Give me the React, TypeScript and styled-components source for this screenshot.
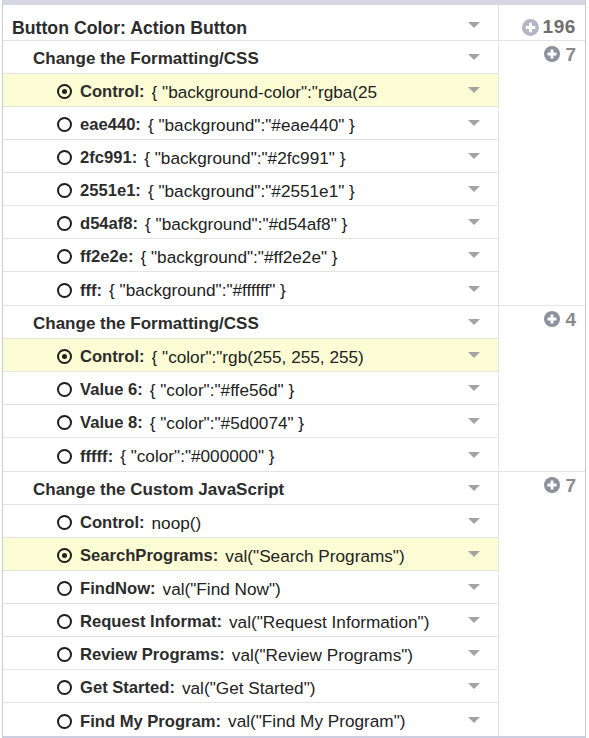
import React from "react";
import styled, { createGlobalStyle } from "styled-components";

const GlobalStyle = createGlobalStyle`
    html, body {
        margin: 0;
        padding: 0;
        background: #fff;
    }
    body {
        font-family: "Liberation Sans", Arial, Helvetica, sans-serif;
        color: #2b2b2b;
    }
`;

type Variation = {
    name: string;
    value: string;
    checked?: boolean;
};

type Group = {
    title: string;
    count: number;
    variations: Variation[];
};

const groups: Group[] = [
    {
        title: "Change the Formatting/CSS",
        count: 7,
        variations: [
            { name: "Control:", value: '{ "background-color":"rgba(25', checked: true },
            { name: "eae440:", value: '{ "background":"#eae440" }' },
            { name: "2fc991:", value: '{ "background":"#2fc991" }' },
            { name: "2551e1:", value: '{ "background":"#2551e1" }' },
            { name: "d54af8:", value: '{ "background":"#d54af8" }' },
            { name: "ff2e2e:", value: '{ "background":"#ff2e2e" }' },
            { name: "fff:", value: '{ "background":"#ffffff" }' },
        ],
    },
    {
        title: "Change the Formatting/CSS",
        count: 4,
        variations: [
            { name: "Control:", value: '{ "color":"rgb(255, 255, 255)', checked: true },
            { name: "Value 6:", value: '{ "color":"#ffe56d" }' },
            { name: "Value 8:", value: '{ "color":"#5d0074" }' },
            { name: "fffff:", value: '{ "color":"#000000" }' },
        ],
    },
    {
        title: "Change the Custom JavaScript",
        count: 7,
        variations: [
            { name: "Control:", value: "noop()" },
            { name: "SearchPrograms:", value: 'val("Search Programs")', checked: true },
            { name: "FindNow:", value: 'val("Find Now")' },
            { name: "Request Informat:", value: 'val("Request Information")' },
            { name: "Review Programs:", value: 'val("Review Programs")' },
            { name: "Get Started:", value: 'val("Get Started")' },
            { name: "Find My Program:", value: 'val("Find My Program")' },
        ],
    },
];

function PlusCircle({ color, size }: { color: string; size: number }) {
    return (
        <svg width={size} height={size} viewBox="0 0 16 16">
            <circle cx="8" cy="8" r="8" fill={color} />
            <path d="M8 3.5v9M3.5 8h9" stroke="#fff" strokeWidth="2.8" />
        </svg>
    );
}

export default function App(): React.ReactElement {
    return (
        <>
            <GlobalStyle />
            <Page>
                <Panel>
                    <Section>
                        <LeftCol>
                            <HeaderRow>
                                <HeaderTitle>Button Color: Action Button</HeaderTitle>
                                <Caret $offset={-3} />
                            </HeaderRow>
                        </LeftCol>
                        <HeaderBadgeCell>
                            <PlusCircle color="#b6b5c5" size={17} />
                            <HeaderCount>196</HeaderCount>
                        </HeaderBadgeCell>
                    </Section>
                    {groups.map((g, gi) => (
                        <Section key={gi} $last={gi === groups.length - 1}>
                            <LeftCol>
                                <GroupRow>
                                    <GroupTitle>{g.title}</GroupTitle>
                                    <Caret />
                                </GroupRow>
                                {g.variations.map((v, vi) => (
                                    <ItemRow
                                        key={vi}
                                        $active={!!v.checked}
                                        $last={vi === g.variations.length - 1}
                                    >
                                        <Radio $checked={!!v.checked} />
                                        <ItemLabel>{v.name}</ItemLabel>
                                        <ItemValue>{v.value}</ItemValue>
                                        <Caret />
                                    </ItemRow>
                                ))}
                            </LeftCol>
                            <GroupBadgeCell>
                                <PlusCircle color="#8f8f9d" size={16} />
                                <GroupCount>{g.count}</GroupCount>
                            </GroupBadgeCell>
                        </Section>
                    ))}
                </Panel>
            </Page>
        </>
    );
}

const Page = styled.div`
    padding-left: 2px;
    width: 584px;
`;

const Panel = styled.div`
    border-top: 5px solid #d6d5e2;
    border-bottom: 4px solid #cfcee0;
    border-left: 1px solid #c9c9c9;
    border-right: 1px solid #c9c9c9;
`;

const Section = styled.div<{ $last?: boolean }>`
    display: grid;
    grid-template-columns: 495px 1fr;
    border-bottom: ${(p) => (p.$last ? "none" : "1px solid #e4e4e4")};
`;

const LeftCol = styled.div`
    display: flex;
    flex-direction: column;
`;

const HeaderRow = styled.div`
    display: flex;
    align-items: center;
    height: 35px;
    padding: 7px 0 0 9px;
    box-sizing: border-box;
`;

const HeaderTitle = styled.div`
    flex: 1;
    font-size: 17.7px;
    font-weight: bold;
    color: #2c2c2c;
    padding-top: 4px;
`;

const GroupRow = styled.div`
    display: flex;
    align-items: center;
    height: 33px;
    padding-left: 30px;
    box-sizing: border-box;
    border-bottom: 1px solid #e4e4e4;
`;

const GroupTitle = styled.div`
    flex: 1;
    font-size: 17px;
    font-weight: bold;
    color: #2c2c2c;
    padding-top: 4px;
`;

const ItemRow = styled.div<{ $active: boolean; $last: boolean }>`
    display: flex;
    align-items: center;
    height: 33px;
    padding-left: 54px;
    box-sizing: border-box;
    background: ${(p) => (p.$active ? "#fdfdd5" : "#fff")};
    border-bottom: ${(p) => (p.$last ? "none" : "1px solid #e4e4e4")};
`;

const Radio = styled.span<{ $checked: boolean }>`
    position: relative;
    width: 15px;
    height: 15px;
    box-sizing: border-box;
    border: 2px solid #1f1f1f;
    border-radius: 50%;
    margin: 3px 8px 0 0;
    flex-shrink: 0;
    &::after {
        content: "";
        display: ${(p) => (p.$checked ? "block" : "none")};
        position: absolute;
        left: 50%;
        top: 50%;
        width: 5px;
        height: 5px;
        margin: -2.5px 0 0 -2.5px;
        border-radius: 50%;
        background: #1f1f1f;
    }
`;

const ItemLabel = styled.span`
    font-size: 16.6px;
    font-weight: bold;
    color: #2c2c2c;
    margin-right: 7px;
    padding-top: 4px;
    white-space: nowrap;
`;

const ItemValue = styled.span`
    flex: 1;
    font-size: 17.2px;
    color: #222;
    padding-top: 4px;
    white-space: nowrap;
    overflow: hidden;
`;

const Caret = styled.span<{ $offset?: number }>`
    width: 0;
    height: 0;
    border-left: 6px solid transparent;
    border-right: 6px solid transparent;
    border-top: 6px solid #a3a3a3;
    margin: ${(p) => p.$offset ?? 0}px 18px 0 12px;
    flex-shrink: 0;
`;

const HeaderBadgeCell = styled.div`
    display: flex;
    align-items: center;
    justify-content: flex-end;
    gap: 3px;
    height: 35px;
    padding: 9px 9px 0 0;
    box-sizing: border-box;
    border-left: 1px solid #e4e4e4;
`;

const HeaderCount = styled.span`
    font-size: 19px;
    letter-spacing: 0.6px;
    font-weight: bold;
    color: #6e6e6e;
`;

const GroupBadgeCell = styled.div`
    display: flex;
    align-items: flex-start;
    justify-content: flex-end;
    gap: 5px;
    padding: 5px 9px 0 0;
    border-left: 1px solid #e4e4e4;
`;

const GroupCount = styled.span`
    font-size: 19px;
    line-height: 17px;
    font-weight: bold;
    color: #8a8a8a;
`;
